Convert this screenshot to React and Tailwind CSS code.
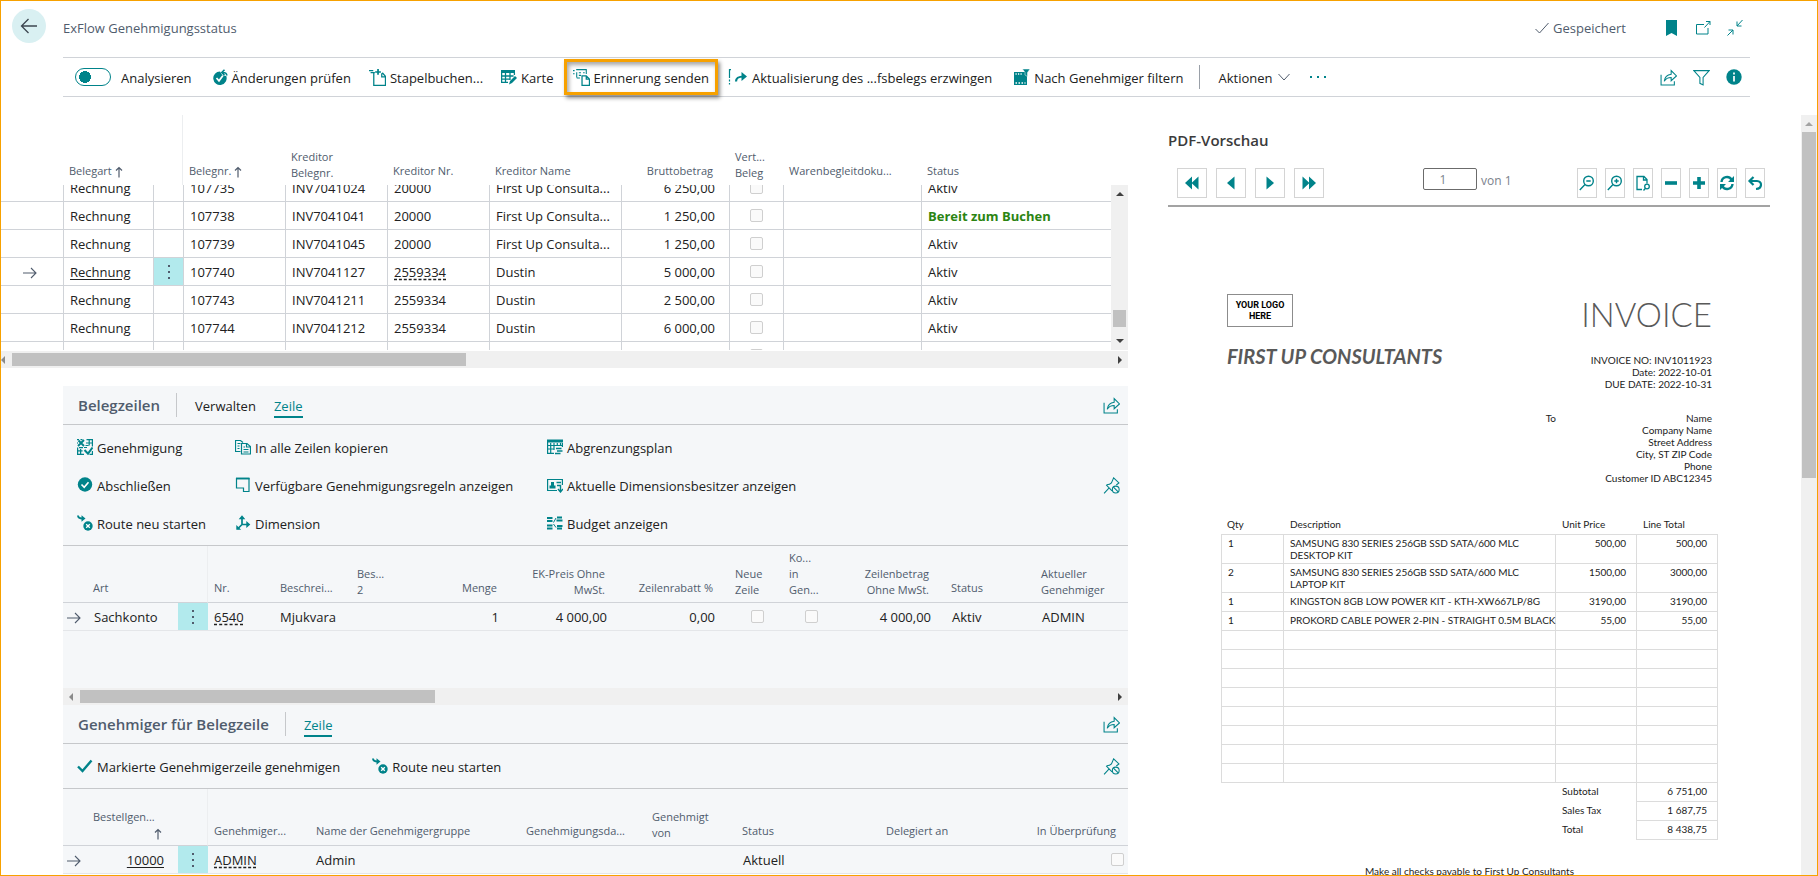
import clsx from "clsx";

const TEAL = "#00838a";

/* ---------- Icons (16 x 16 grid) ---------- */

function Icon({ children, className = "size-4" }) {
  return (
    <svg
      viewBox="0 0 16 16"
      fill="none"
      stroke={TEAL}
      strokeWidth="1"
      className={clsx("shrink-0", className)}
      aria-hidden="true"
    >
      {children}
    </svg>
  );
}

const BackIcon = () => (
  <svg viewBox="0 0 18 18" fill="none" stroke="#3c4650" strokeWidth="1.3" className="size-[18px]" aria-hidden="true">
    <path d="M17 9H1.5M8.500 2 1.500 9l7 7" />
  </svg>
);

const RowArrowIcon = () => (
  <svg viewBox="0 0 14 12" fill="none" stroke="#505c6d" strokeWidth="1.1" className="inline-block h-3 w-3.5" aria-hidden="true">
    <path d="M0 6h13M8 1l5 5-5 5" />
  </svg>
);

const SortIcon = () => (
  <svg viewBox="0 0 8 12" fill="none" stroke="#505c6d" strokeWidth="1.2" className="inline-block h-3 w-2" aria-hidden="true">
    <path d="M4 11.500V1.500M1 4.500l3-3 3 3" />
  </svg>
);

const SavedIcon = () => (
  <svg viewBox="0 0 14 12" fill="none" stroke="#505c6d" strokeWidth="1" className="h-3 w-3.5" aria-hidden="true">
    <path d="M.5 7l4 4L13.500 1" />
  </svg>
);

const BookmarkIcon = () => (
  <svg viewBox="0 0 11 16" fill={TEAL} className="h-4 w-[11px]" aria-hidden="true">
    <path d="M0 0h11v16l-5.500-3L0 16z" />
  </svg>
);

const PopoutIcon = () => (
  <Icon>
    <path d="M9 4.500H1.500v9.500h11.500V8M9.500 7.500l5.500-6M11 1.500h4V5" />
  </Icon>
);

const CollapseIcon = () => (
  <Icon>
    <path d="M15.500 0 10 6M10 1.500V6h4.500M.5 15.500 6 10M1.500 10H6v4.500" />
  </Icon>
);

const ShareIcon = () => (
  <Icon className="size-[17px]">
    <path d="M1 5.500v9.500h12.500V11.500M4 11.500c.5-4 2.500-6 6.500-6.500V1.500l5 5-5 4.500V8c-2.500 0-5 1-6.500 3.500z" />
  </Icon>
);

const FilterIcon = () => (
  <Icon className="size-[17px]">
    <path d="M.8 1.500h14.400L9.500 8v7l-3-1.500V8z" />
  </Icon>
);

const InfoIcon = () => (
  <Icon>
    <circle cx="8" cy="8" r="7.700" fill={TEAL} stroke="none" />
    <path d="M8 3.500v2M8 7v5.500" stroke="#fff" strokeWidth="1.700" />
  </Icon>
);

const PinOffIcon = () => (
  <Icon className="size-[17px]">
    <path d="M6 10 1 15.500M3 7.500 8.500 13M3.500 7.300c2 0 3.500-.6 4.500-1.800L10 .8l5 4.700-2.500 2" />
    <circle cx="12" cy="11.800" r="3.200" />
    <path d="M9.800 9.600l4.500 4.500" />
  </Icon>
);

const CheckChangesIcon = () => (
  <Icon>
    <path d="M8 2.500A6.700 6.700 0 1 0 14.300 7L10.500 6.500z" fill={TEAL} stroke="none" />
    <path d="M14.800 6.500c0-2-1.500-3-4-3M12.500.8 9.800 3.500l2.700 2.700" strokeWidth="1.600" />
    <path d="M4.500 9 7 11.800l3.800-5" stroke="#fff" strokeWidth="1.700" />
  </Icon>
);

const BatchPostIcon = () => (
  <Icon className="size-[17px]">
    <path d="M0 1.500h4M1.500 3.500h3M5.500 3.500h-1v12h11V7l-3-3.500M12 4v3.500h3.500" strokeWidth="1.200" />
    <path d="M8.500 0v5.500M5.800 2.800h5.400" strokeWidth="1.600" />
  </Icon>
);

const CardIcon = () => (
  <Icon>
    <path d="M0 1h14v3H0z" fill={TEAL} stroke="none" />
    <path d="M.6 4v9.400H7M.6 7h12M.6 10.200h8M4.500 4v9.500M9 4v7M13.400 4v2" strokeWidth="1.300" />
    <path d="m8 15.500 1-3.500 5-5 2 2-5 5z" fill={TEAL} stroke="none" />
  </Icon>
);

const ReminderIcon = () => (
  <Icon className="size-[17px]">
    <path d="M0 1.500h1.500M0 4.500h1.500M3 .6h10M3.500 3v5M12.500.6v4M5.500 3.500h2M9.500 3.500h1.500M3.500 8.500h3M5.500 6h2" />
    <path d="M8.500 6.500h4l3 3v6h-7zM12.500 6.500v3h3" strokeWidth="1.200" />
  </Icon>
);

const ForceUpdateIcon = () => (
  <svg viewBox="0 0 20 16" fill="none" stroke={TEAL} className="h-4 w-5 shrink-0" aria-hidden="true">
    <path d="M3 .6H1.500V9M1.500 10.500v2M1.500 14v1.500" strokeWidth="1.200" />
    <path d="M8 12.500c0-3.500 2-5 8-5" strokeWidth="2.200" />
    <path d="m13.500 3 5.500 4.500-5.500 4.500z" fill={TEAL} stroke="none" />
  </svg>
);

const ApproverFilterIcon = () => (
  <Icon>
    <path d="M0 3h13v13H0z" fill={TEAL} stroke="none" />
    <path d="M8.500 0H16l-2.500 3.500v4L11 6V3.500z" fill={TEAL} stroke="#fff" strokeWidth=".5" />
    <path d="M1.500 5h1.200M4 5h1.200M6.500 5h1.200M1.500 14h1.500M4.500 14H6M7.500 14H9M10.500 14h1" stroke="#fff" strokeWidth="1.400" />
  </Icon>
);

const ApprovalIcon = () => (
  <Icon>
    <path d="M1.500 1.500l5.500 5.500M7 1 1 7" strokeWidth="1.900" />
    <path d="M0 .6h2M3.500.6h2M0 3v2M9.500.6h5.900v7M9 4h6M12.200 1v5.500M8.500 6.500h3" strokeWidth="1.200" />
    <path d="M.6 8.500v6.900H7M.6 11.800h5M3.600 10v5.500M2 8.600h4" strokeWidth="1.300" />
    <path d="M7.500 11l3.500 3.700 4.500-6.200" strokeWidth="2" />
    <path d="M15.400 12v4M12.500 15.400H16M7 8.500h3" strokeWidth="1.200" />
  </Icon>
);

const DoneIcon = () => (
  <Icon>
    <circle cx="8" cy="7.500" r="7.200" fill={TEAL} stroke="none" />
    <path d="m4.500 7.500 2.700 2.800 4.300-5" stroke="#fff" strokeWidth="1.600" />
  </Icon>
);

const RestartIcon = () => (
  <Icon>
    <path d="M1 .5c0 2 1.500 3 5 3" strokeWidth="1.900" />
    <path d="M4.500.3 8.500 3.500l-4 3.200z" fill={TEAL} stroke="none" />
    <circle cx="11" cy="11" r="4.700" fill={TEAL} stroke="none" />
    <path d="m9.200 9.200 3.600 3.600M12.800 9.200l-3.600 3.600" stroke="#fff" strokeWidth="1.300" />
  </Icon>
);

const CopyIcon = () => (
  <Icon>
    <path d="M5.500 12.500h-5V1.500h5l2.500 2M2.500 4.500h3M2.500 7h2M2.500 9.500h2" strokeWidth="1.200" />
    <path d="M6.500 4.500h5.500l3.500 3v7.500h-9zM11.500 4.500V8h4M8.500 8h1.500M8.500 10.500h5M8.500 13h5" strokeWidth="1.200" />
  </Icon>
);

const RulesIcon = () => (
  <Icon>
    <path d="M1.500 1.500h12.500v13H8.500v-3.500H1.500z" strokeWidth="1.200" />
    <path d="M1 1.500h13.500" strokeWidth="1.900" />
  </Icon>
);

const DimensionIcon = () => (
  <Icon>
    <path d="M7 2v7.500L2.500 14M7 9.500h6" strokeWidth="1.700" />
    <path d="m7 .3 3.300 3.900H3.700zM15.300 9.500l-4 3.400V6.100zM1.300 14.800V9.900l4.900 4.900z" fill={TEAL} stroke="none" />
  </Icon>
);

const DeferralIcon = () => (
  <Icon>
    <path d="M0 .5h16v3H0z" fill={TEAL} stroke="none" />
    <path d="M.6 3v11.400H7M0 6.500h16M.6 10h7M3.700 4v10M7 4v7M10.300 4v3M13.500 4v3M15.400 4v4" strokeWidth="1.200" />
    <path d="M9 9.500h5.500M10 12h5.500M8 14.500h5.500" strokeWidth="1.700" />
  </Icon>
);

const OwnerIcon = () => (
  <Icon>
    <path d="M10 13.500H.6v-11h14.800V8" strokeWidth="1.200" />
    <path d="M2.500 11.500v-3h1.500V5h3v3.500h1.500v3z" fill={TEAL} stroke="none" />
    <path d="M9.500 5.500H14M10 8.500h3.500v6M11 12l2.500 3 2.500-3" strokeWidth="1.400" />
  </Icon>
);

const BudgetIcon = () => (
  <Icon>
    <path d="M0 3h5.500M0 6h5.500M0 10.500h5.500M0 13.500h5.500M10 2.500h5M9.500 5.500h6M10 11h5.500M10 13.500h5" strokeWidth="1.900" />
    <path d="M9 3 6.500 7.500M6.500 9 9 12.500" />
  </Icon>
);

const ApproveIcon = () => (
  <Icon>
    <path d="M1 8.500 5.500 13 14.500 2.500" strokeWidth="2.400" />
  </Icon>
);

/* ---------- Shared pieces ---------- */

function ActionButton({ icon, children, className }) {
  return (
    <button type="button" className={clsx("flex items-center gap-1 whitespace-nowrap text-left", className)}>
      {icon}
      <span className="pt-[3px]">{children}</span>
    </button>
  );
}

function IconButton({ label, children, className }) {
  return (
    <button type="button" aria-label={label} className={clsx("flex items-center justify-center", className)}>
      {children}
    </button>
  );
}

function ReadOnlyCheck({ label }) {
  return (
    <input
      type="checkbox"
      aria-label={label}
      disabled
      className="block size-[13px] appearance-none rounded-[2px] border border-[#cfcfcf] bg-[#fafafa]"
    />
  );
}

function HScrollbar({ thumb, inset }) {
  return (
    <div className="flex h-[17px] items-center bg-[#f0f0f0]">
      <span className={clsx("flex", inset ? "w-[17px] pl-1.5" : "w-[11px]")}>
        <span className="border-y-4 border-r-4 border-y-transparent border-r-[#8a8a8a]" />
      </span>
      <div className="flex-1 pr-6">
        <div className={clsx("h-[13px] bg-[#c1c1c1]", thumb)} />
      </div>
      <span className="mr-1.5 border-y-4 border-l-4 border-y-transparent border-l-[#404040]" />
    </div>
  );
}

function Cols({ widths }) {
  return (
    <colgroup>
      {widths.map((w, i) => (
        <col key={i} className={w} />
      ))}
    </colgroup>
  );
}

// Column captions sit on the bottom edge, wrapped ones use tighter lines
function HeadCell({ lines = [], right, sort, pinned }) {
  return (
    <th
      className={clsx(
        "whitespace-nowrap pb-1 align-bottom text-[11px] font-normal text-[#505c6d]",
        right ? "pr-4 text-right" : "pl-1.5 text-left",
        lines.length > 1 ? "leading-4" : "leading-5",
        pinned && "border-r border-[#eceef0]"
      )}
    >
      {lines.map((line, i) => (
        <span key={line} className="block">
          {line} {sort && i === lines.length - 1 && <SortIcon />}
        </span>
      ))}
    </th>
  );
}

function MenuCell({ active, className }) {
  return (
    <td className={clsx("px-0", className, active && "bg-[#b2eaed]")}>
      {active && (
        <button type="button" aria-label="Weitere Optionen" className="block w-full">
          <svg viewBox="0 0 4 16" fill="#505c6d" className="mx-auto h-4 w-1" aria-hidden="true">
            <path d="M1 1h2v2H1zM1 7h2v2H1zM1 13h2v2H1z" />
          </svg>
        </button>
      )}
    </td>
  );
}

/* ---------- Top bars ---------- */

function TitleBar() {
  return (
    <header className="flex h-14 items-start pl-[11px] pr-[74px] pt-2">
      <button
        type="button"
        aria-label="Zurück"
        className="flex size-[34px] items-center justify-center rounded-full bg-[#d9f0f2]"
      >
        <BackIcon />
      </button>
      <h1 className="ml-[17px] mt-[9px] text-[13px] leading-5 text-[#505c6d]">ExFlow Genehmigungsstatus</h1>
      <div className="ml-auto mt-[9px] flex items-center text-[13px] leading-5 text-[#505c6d]">
        <SavedIcon />
        <span className="ml-1 mr-10">Gespeichert</span>
        <div className="flex items-center gap-4">
          <IconButton label="Lesezeichen" className="mr-0.5">
            <BookmarkIcon />
          </IconButton>
          <IconButton label="In neuem Fenster öffnen">
            <PopoutIcon />
          </IconButton>
          <IconButton label="Verkleinern">
            <CollapseIcon />
          </IconButton>
        </div>
      </div>
    </header>
  );
}

function ActionBar() {
  return (
    <nav className="ml-[62px] mr-[67px] flex h-10 items-center border-y border-[#d0d3d8] text-[13px] text-[#212121]">
      <label className="ml-3 flex items-center gap-2.5">
        <input
          type="checkbox"
          role="switch"
          className="h-[18px] w-9 appearance-none rounded-full border border-[#00838a] bg-[radial-gradient(circle_at_9px_8px,#00838a_6px,transparent_6px)]"
        />
        <span className="pt-[3px]">Analysieren</span>
      </label>
      <ActionButton icon={<CheckChangesIcon />} className="ml-5">Änderungen prüfen</ActionButton>
      <ActionButton icon={<BatchPostIcon />} className="ml-[18px]">Stapelbuchen...</ActionButton>
      <ActionButton icon={<CardIcon />} className="ml-[18px]">Karte</ActionButton>
      <ActionButton
        icon={<ReminderIcon />}
        className="ml-2.5 h-9 border-3 border-[#f7a100] px-1.5 shadow-[2px_3px_4px_rgba(0,0,0,0.45),inset_2px_3px_4px_rgba(0,0,0,0.35)]"
      >
        Erinnerung senden
      </ActionButton>
      <ActionButton icon={<ForceUpdateIcon />} className="ml-2.5">Aktualisierung des ...fsbelegs erzwingen</ActionButton>
      <ActionButton icon={<ApproverFilterIcon />} className="ml-[22px]">Nach Genehmiger filtern</ActionButton>
      <span className="ml-4 mr-[18px] h-6 w-px bg-[#9aa0a8]" />
      <button type="button" className="flex items-center gap-1.5">
        <span className="pt-[3px]">Aktionen</span>
        <svg viewBox="0 0 12 8" fill="none" stroke="#505c6d" className="h-2 w-3" aria-hidden="true">
          <path d="M.5 1 6 7l5.500-6" />
        </svg>
      </button>
      <button type="button" aria-label="Mehr anzeigen" className="ml-5">
        <svg viewBox="0 0 16 4" fill={TEAL} className="h-1 w-4" aria-hidden="true">
          <path d="M0 1h2v2H0zM7 1h2v2H7zM14 1h2v2h-2z" />
        </svg>
      </button>
      <div className="ml-auto mr-2 flex items-center gap-4">
        <IconButton label="Teilen">
          <ShareIcon />
        </IconButton>
        <IconButton label="Filtern">
          <FilterIcon />
        </IconButton>
        <IconButton label="Info">
          <InfoIcon />
        </IconButton>
      </div>
    </nav>
  );
}

/* ---------- Document list ---------- */

const docCols = [
  "w-[62px]",
  "w-[90px]",
  "w-[30px]",
  "w-[102px]",
  "w-[102px]",
  "w-[102px]",
  "w-[132px]",
  "w-[108px]",
  "w-[54px]",
  "w-[138px]",
  "w-auto",
];

const docs = [
  { no: "107735", ext: "INV7041024", vendor: "20000", name: "First Up Consulta...", amount: "6 250,00", status: "Aktiv" },
  { no: "107738", ext: "INV7041041", vendor: "20000", name: "First Up Consulta...", amount: "1 250,00", status: "Bereit zum Buchen", ready: true },
  { no: "107739", ext: "INV7041045", vendor: "20000", name: "First Up Consulta...", amount: "1 250,00", status: "Aktiv" },
  { no: "107740", ext: "INV7041127", vendor: "2559334", name: "Dustin", amount: "5 000,00", status: "Aktiv", current: true },
  { no: "107743", ext: "INV7041211", vendor: "2559334", name: "Dustin", amount: "2 500,00", status: "Aktiv" },
  { no: "107744", ext: "INV7041212", vendor: "2559334", name: "Dustin", amount: "6 000,00", status: "Aktiv" },
];

function DocumentList() {
  const line = "border-l border-[#d0d3d8]";
  const cell = "border-l border-[#d0d3d8] pl-1.5";

  return (
    <section>
      <div className="flex pr-[17px]">
        <table className="w-full table-fixed border-separate border-spacing-0">
          <Cols widths={docCols} />
          <thead>
            <tr className="h-[70px]">
              <th />
              <HeadCell lines={["Belegart"]} sort />
              <HeadCell pinned />
              <HeadCell lines={["Belegnr."]} sort />
              <HeadCell lines={["Kreditor", "Belegnr."]} />
              <HeadCell lines={["Kreditor Nr."]} />
              <HeadCell lines={["Kreditor Name"]} />
              <HeadCell lines={["Bruttobetrag"]} right />
              <HeadCell lines={["Vert...", "Beleg"]} />
              <HeadCell lines={["Warenbegleitdoku..."]} />
              <HeadCell lines={["Status"]} />
            </tr>
          </thead>
        </table>
      </div>
      <div className="flex h-[166px] border-b border-white">
        <div className="min-w-0 flex-1 overflow-hidden">
          {/* list is scrolled part way into its first row */}
          <table className="-mt-[11px] w-full table-fixed border-separate border-spacing-0 text-[13px] leading-[18px] text-[#212121] [&_td]:whitespace-nowrap [&_td]:border-b [&_td]:border-b-[#d0d3d8] [&_td]:py-0">
            <Cols widths={docCols} />
            <tbody>
              {docs.map((d) => (
                <tr key={d.no} className="h-7">
                  <td className="pl-[22px]">{d.current && <RowArrowIcon />}</td>
                  <td className={cell}>
                    {d.current ? (
                      <a href="#beleg" className="underline underline-offset-2">
                        Rechnung
                      </a>
                    ) : (
                      "Rechnung"
                    )}
                  </td>
                  <MenuCell active={d.current} className={line} />
                  <td className={cell}>{d.no}</td>
                  <td className={cell}>{d.ext}</td>
                  <td className={cell}>
                    <span className={clsx(d.current && "underline decoration-dashed underline-offset-2")}>{d.vendor}</span>
                  </td>
                  <td className={cell}>{d.name}</td>
                  <td className={clsx(line, "pr-3.5 text-right")}>{d.amount}</td>
                  <td className={clsx(line, "pl-5")}>
                    <ReadOnlyCheck label="Vertraulicher Beleg" />
                  </td>
                  <td className={cell} />
                  <td className={clsx(cell, d.ready && "font-bold text-[#2b8412]")}>{d.status}</td>
                </tr>
              ))}
              <tr className="h-7">
                <td />
                {docCols.slice(1).map((_, i) => (
                  <td key={i} className={clsx(line, i === 7 && "pl-5")}>
                    {i === 7 && <ReadOnlyCheck label="Vertraulicher Beleg" />}
                  </td>
                ))}
              </tr>
            </tbody>
          </table>
        </div>
        <div className="flex w-[17px] flex-col items-center bg-[#f0f0f0] py-[7px]">
          <span className="border-x-4 border-b-4 border-x-transparent border-b-[#404040]" />
          <span className="mb-3 mt-auto h-[17px] w-[13px] bg-[#c1c1c1]" />
          <span className="border-x-4 border-t-4 border-x-transparent border-t-[#404040]" />
        </div>
      </div>
      <HScrollbar thumb="w-[42%]" />
    </section>
  );
}

/* ---------- Document lines ---------- */

function PartHeader({ title, tabs, active }) {
  return (
    <div className="flex h-[39px] items-center border-b border-[#c6c8cb] pl-[15px] pr-2 text-[13px]">
      <h2 className="text-[15px] font-semibold text-[#505c6d]">{title}</h2>
      <span className="ml-4 mr-[18px] h-6 w-px bg-[#c6c8cb]" />
      <div className="flex flex-1 gap-[18px]">
        {tabs.map((tab) => (
          <button
            key={tab}
            type="button"
            className={clsx(
              "border-b-2 pt-[3px] leading-5",
              tab === active ? "border-[#00838a] text-[#00838a]" : "border-transparent text-[#212121]"
            )}
          >
            {tab}
          </button>
        ))}
      </div>
      <IconButton label="Teilen">
        <ShareIcon />
      </IconButton>
    </div>
  );
}

const lineActions = [
  ["Genehmigung", ApprovalIcon],
  ["In alle Zeilen kopieren", CopyIcon],
  ["Abgrenzungsplan", DeferralIcon],
  ["Abschließen", DoneIcon],
  ["Verfügbare Genehmigungsregeln anzeigen", RulesIcon],
  ["Aktuelle Dimensionsbesitzer anzeigen", OwnerIcon],
  ["Route neu starten", RestartIcon],
  ["Dimension", DimensionIcon],
  ["Budget anzeigen", BudgetIcon],
];

const lineCols = [
  "w-[24px]",
  "w-[91px]",
  "w-[30px]",
  "w-[66px]",
  "w-[77px]",
  "w-[54px]",
  "w-[108px]",
  "w-[108px]",
  "w-[108px]",
  "w-[54px]",
  "w-[54px]",
  "w-[108px]",
  "w-[90px]",
  "w-auto",
];

function DocumentLines() {
  return (
    <section>
      <PartHeader title="Belegzeilen" tabs={["Verwalten", "Zeile"]} active="Zeile" />
      <div className="flex items-center border-b border-[#c6c8cb] py-[3px] pl-3.5 pr-2">
        <div className="grid flex-1 auto-rows-[38px] grid-cols-[158px_312px_1fr] text-[13px] text-[#212121]">
          {lineActions.map(([label, LineIcon]) => (
            <ActionButton key={label} icon={<LineIcon />}>
              {label}
            </ActionButton>
          ))}
        </div>
        <IconButton label="Lösen">
          <PinOffIcon />
        </IconButton>
      </div>
      <table className="w-full table-fixed border-separate border-spacing-0 [&_td]:border-b [&_td]:border-[#e4e6e9] [&_td]:py-0 [&_th]:border-b [&_th]:border-b-[#d0d3d8]">
        <Cols widths={lineCols} />
        <thead>
          <tr className="h-[57px]">
            <th />
            <HeadCell lines={["Art"]} />
            <HeadCell pinned />
            <HeadCell lines={["Nr."]} />
            <HeadCell lines={["Beschrei..."]} />
            <HeadCell lines={["Bes...", "2"]} />
            <HeadCell lines={["Menge"]} right />
            <HeadCell lines={["EK-Preis Ohne", "MwSt."]} right />
            <HeadCell lines={["Zeilenrabatt %"]} right />
            <HeadCell lines={["Neue", "Zeile"]} />
            <HeadCell lines={["Ko...", "in", "Gen..."]} />
            <HeadCell lines={["Zeilenbetrag", "Ohne MwSt."]} right />
            <HeadCell lines={["Status"]} />
            <HeadCell lines={["Aktueller", "Genehmiger"]} />
          </tr>
        </thead>
        <tbody>
          <tr className="h-7 whitespace-nowrap text-[13px] leading-[18px] text-[#212121]">
            <td className="pl-1">
              <RowArrowIcon />
            </td>
            <td className="pl-[7px]">Sachkonto</td>
            <MenuCell active />
            <td className="pl-1.5">
              <span className="underline decoration-dashed underline-offset-2">6540</span>
            </td>
            <td className="pl-1.5">Mjukvara</td>
            <td />
            <td className="pr-3.5 text-right">1</td>
            <td className="pr-3.5 text-right">4 000,00</td>
            <td className="pr-3.5 text-right">0,00</td>
            <td className="pl-[22px]">
              <ReadOnlyCheck label="Neue Zeile" />
            </td>
            <td className="pl-[22px]">
              <ReadOnlyCheck label="Kosten in Genehmigung" />
            </td>
            <td className="pr-3.5 text-right">4 000,00</td>
            <td className="pl-[7px]">Aktiv</td>
            <td className="pl-[7px]">ADMIN</td>
          </tr>
        </tbody>
      </table>
      <div className="h-[57px]" />
      <HScrollbar thumb="w-[35%]" inset />
    </section>
  );
}

/* ---------- Line approvers ---------- */

const approverCols = [
  "w-[24px]",
  "w-[91px]",
  "w-[30px]",
  "w-[102px]",
  "w-[210px]",
  "w-[126px]",
  "w-[90px]",
  "w-[144px]",
  "w-[144px]",
  "w-auto",
];

function LineApprovers() {
  return (
    <section>
      <PartHeader title="Genehmiger für Belegzeile" tabs={["Zeile"]} active="Zeile" />
      <div className="flex h-[45px] items-center border-b border-[#c6c8cb] pl-3.5 pr-2 text-[13px] text-[#212121]">
        <ActionButton icon={<ApproveIcon />}>Markierte Genehmigerzeile genehmigen</ActionButton>
        <ActionButton icon={<RestartIcon />} className="ml-8">
          Route neu starten
        </ActionButton>
        <div className="ml-auto">
          <IconButton label="Lösen">
            <PinOffIcon />
          </IconButton>
        </div>
      </div>
      <table className="w-full table-fixed border-separate border-spacing-0 [&_td]:border-b [&_td]:border-[#e4e6e9] [&_td]:py-0 [&_th]:border-b [&_th]:border-b-[#d0d3d8]">
        <Cols widths={approverCols} />
        <thead>
          <tr className="h-[57px]">
            <th />
            <th className="pb-1 pl-1.5 text-left align-bottom text-[11px] font-normal leading-4 text-[#505c6d]">
              <span className="block">Bestellgen...</span>
              <span className="block pr-4 text-right">
                <SortIcon />
              </span>
            </th>
            <HeadCell pinned />
            <HeadCell lines={["Genehmiger..."]} />
            <HeadCell lines={["Name der Genehmigergruppe"]} />
            <HeadCell lines={["Genehmigungsda..."]} />
            <HeadCell lines={["Genehmigt", "von"]} />
            <HeadCell lines={["Status"]} />
            <HeadCell lines={["Delegiert an"]} />
            <th className="whitespace-nowrap pb-1 pr-3 text-right align-bottom text-[11px] font-normal leading-5 text-[#505c6d]">
              In Überprüfung
            </th>
          </tr>
        </thead>
        <tbody>
          <tr className="h-7 whitespace-nowrap text-[13px] leading-[18px] text-[#212121]">
            <td className="pl-1">
              <RowArrowIcon />
            </td>
            <td className="pr-3.5 text-right">
              <a href="#genehmiger" className="underline underline-offset-2">
                10000
              </a>
            </td>
            <MenuCell active />
            <td className="pl-1.5">
              <span className="underline decoration-dashed underline-offset-2">ADMIN</span>
            </td>
            <td className="pl-1.5">Admin</td>
            <td />
            <td />
            <td className="pl-[7px]">Aktuell</td>
            <td />
            <td className="pr-1">
              <div className="flex justify-end">
                <ReadOnlyCheck label="In Überprüfung" />
              </div>
            </td>
          </tr>
        </tbody>
      </table>
    </section>
  );
}

/* ---------- PDF preview ---------- */

const pageButtons = [
  ["Erste Seite", "M8 1.500v13L1 8zM14.500 1.500v13L7.500 8z"],
  ["Vorherige Seite", "M11.500 1.500v13L4 8z"],
  ["Nächste Seite", "M4.500 1.500v13L12 8z"],
  ["Letzte Seite", "M1.500 1.500v13L8.500 8zM8 1.500v13L15 8z"],
];

const toolButtons = [
  ["Verkleinern", <><circle cx="9.500" cy="6" r="4.800" strokeWidth="1.400" /><path d="M6 9.500.8 15M7.300 6h4.400" strokeWidth="1.400" /></>],
  ["Vergrößern", <><circle cx="9.500" cy="6" r="4.800" strokeWidth="1.400" /><path d="M6 9.500.8 15M7.300 6h4.400M9.500 3.800v4.400" strokeWidth="1.400" /></>],
  ["Seite anpassen", <><path d="M7 14.500H2v-13h7l3 3v4M8.500 1.500v3.500H12" strokeWidth="1.300" /><circle cx="12" cy="11.500" r="2.300" strokeWidth="1.300" /><path d="m10.500 13.200-2 2.300" strokeWidth="1.300" /></>],
  ["Minus", <path d="M2 8h12" strokeWidth="3.600" />],
  ["Plus", <path d="M2 8h12M8 2v12" strokeWidth="3.600" />],
  ["Aktualisieren", <><path d="M2.500 7C3 1.500 10 .5 12.500 4.500M13.500 9C13 14.500 6 15.500 3.500 11.500" strokeWidth="2.400" /><path d="M15 1v6H9zM1 15V9h6z" fill={TEAL} stroke="none" /></>],
  ["Zurücksetzen", <><path d="M3 6h7c5.500 0 5.500 7.500-1 8" strokeWidth="2.200" /><path d="M6.500 2 2.500 6l4 4" strokeWidth="2.200" /></>],
];

const invoiceRows = [
  { qty: "1", text: ["SAMSUNG 830 SERIES 256GB SSD SATA/600 MLC", "DESKTOP KIT"], price: "500,00", total: "500,00" },
  { qty: "2", text: ["SAMSUNG 830 SERIES 256GB SSD SATA/600 MLC", "LAPTOP KIT"], price: "1500,00", total: "3000,00" },
  { qty: "1", text: ["KINGSTON 8GB LOW POWER KIT - KTH-XW667LP/8G"], price: "3190,00", total: "3190,00" },
  { qty: "1", text: ["PROKORD CABLE POWER 2-PIN - STRAIGHT 0.5M BLACK"], price: "55,00", total: "55,00" },
];

const totals = [
  ["Subtotal", "6 751,00"],
  ["Sales Tax", "1 687,75"],
  ["Total", "8 438,75"],
];

function Invoice() {
  const box = "border-b border-r border-[#dcdcdc]";

  return (
    <article className="pl-[53px] pr-[52px] font-[Lato,sans-serif] text-[10px] leading-3 text-[#1c1c1c]">
      <div className="flex items-start justify-between px-1.5 pt-[87px]">
        <div>
          <div className="h-[33px] w-[66px] border border-[#8c8c8c] pt-[5px] text-center font-[Roboto,sans-serif] text-[9px] font-bold leading-[11px] text-black">
            YOUR LOGO
            <br />
            HERE
          </div>
          <h3 className="mt-[17px] text-[20px] font-bold italic leading-6 text-[#595959]">FIRST UP CONSULTANTS</h3>
        </div>
        <div className="text-right">
          <p className="text-[33px] font-light leading-10 text-[#595959]">INVOICE</p>
          <p className="mt-5">INVOICE NO: INV1011923</p>
          <p>Date: 2022-10-01</p>
          <p>DUE DATE: 2022-10-31</p>
        </div>
      </div>
      <div className="mt-[22px] flex justify-end pr-1.5">
        <span>To</span>
        <address className="w-[156px] text-right not-italic">
          Name
          <br />
          Company Name
          <br />
          Street Address
          <br />
          City, ST ZIP Code
          <br />
          Phone
          <br />
          Customer ID ABC12345
        </address>
      </div>
      <table className="mt-[33px] w-full table-fixed border-separate border-spacing-0">
        <Cols widths={["w-[63px]", "w-auto", "w-[81px]", "w-[81px]"]} />
        <thead>
          <tr className="h-[18px] text-left [&_th]:border-b [&_th]:border-[#dcdcdc] [&_th]:px-1.5 [&_th]:pb-1 [&_th]:pt-0 [&_th]:font-normal">
            <th>Qty</th>
            <th>Description</th>
            <th>Unit Price</th>
            <th>Line Total</th>
          </tr>
        </thead>
        <tbody className="align-top [&_td]:pb-0 [&_td]:pt-0.5">
          {invoiceRows.map((row) => (
            <tr key={row.text.join()} className={row.text.length > 1 ? "h-[29px]" : "h-[19px]"}>
              <td className={clsx(box, "border-l px-1.5")}>{row.qty}</td>
              <td className={clsx(box, "whitespace-nowrap px-1.5")}>
                {row.text.map((t) => (
                  <span key={t} className="block">{t}</span>
                ))}
              </td>
              <td className={clsx(box, "px-2.5 text-right")}>{row.price}</td>
              <td className={clsx(box, "px-2.5 text-right")}>{row.total}</td>
            </tr>
          ))}
          {Array.from({ length: 8 }, (_, i) => (
            <tr key={i} className="h-[19px]">
              <td className={clsx(box, "border-l")} />
              <td className={box} />
              <td className={box} />
              <td className={box} />
            </tr>
          ))}
          {totals.map(([label, value]) => (
            <tr key={label} className="h-[19px]">
              <td />
              <td />
              <td className="border-r border-[#dcdcdc] px-1.5">{label}</td>
              <td className={clsx(box, "px-2.5 text-right")}>{value}</td>
            </tr>
          ))}
        </tbody>
      </table>
      <p className="mt-[25px] text-center">Make all checks payable to First Up Consultants</p>
    </article>
  );
}

function PdfPreview() {
  return (
    <aside className="pl-10 pr-[31px] pt-[13px]">
      <h2 className="text-[15px] font-semibold leading-6 text-[#3b3b3b]">PDF-Vorschau</h2>
      <div className="mt-4 flex h-[39px] items-start border-b-2 border-[#a3a3a3] pl-[9px] pr-[5px]">
        <div className="flex gap-[9px]">
          {pageButtons.map(([label, d]) => (
            <button
              key={label}
              type="button"
              aria-label={label}
              className="flex size-[30px] items-center justify-center border border-[#d4d4d4]"
            >
              <svg viewBox="0 0 16 16" fill={TEAL} className="h-4 w-4" aria-hidden="true">
                <path d={d} />
              </svg>
            </button>
          ))}
        </div>
        <label className="ml-[99px] flex items-center gap-1 text-[12px] text-[#7b828c]">
          <input
            type="text"
            aria-label="Seite"
            defaultValue="1"
            className="h-[22px] w-[54px] rounded-[2px] border border-[#6b6b6b] pr-3.5 text-center text-[12px]"
          />
          <span className="pt-[3px]">von 1</span>
        </label>
        <div className="ml-auto flex gap-2">
          {toolButtons.map(([label, drawing]) => (
            <button
              key={label}
              type="button"
              aria-label={label}
              className="flex h-[30px] w-5 items-center justify-center border border-[#d4d4d4]"
            >
              <Icon>{drawing}</Icon>
            </button>
          ))}
        </div>
      </div>
      <Invoice />
    </aside>
  );
}

export default function App() {
  return (
    <div className="flex h-screen flex-col overflow-hidden border border-[#f7a100] bg-white font-['Open_Sans','Noto_Sans',sans-serif]">
      <TitleBar />
      <ActionBar />
      <main className="mt-[18px] grid min-h-0 flex-1 grid-cols-[1127fr_673fr_16px]">
        <div className="min-w-0 overflow-hidden">
          <DocumentList />
          <div className="ml-[62px] mt-[18px] bg-[#f5f7f9]">
            <DocumentLines />
            <LineApprovers />
          </div>
        </div>
        <div className="min-w-0 overflow-hidden">
          <PdfPreview />
        </div>
        <div className="flex flex-col items-center bg-[#f0f0f0] pt-[7px]">
          <span className="border-x-4 border-b-4 border-x-transparent border-b-[#a3a3a3]" />
          <span className="mt-1.5 h-[46%] w-3.5 bg-[#c1c1c1]" />
        </div>
      </main>
    </div>
  );
}
